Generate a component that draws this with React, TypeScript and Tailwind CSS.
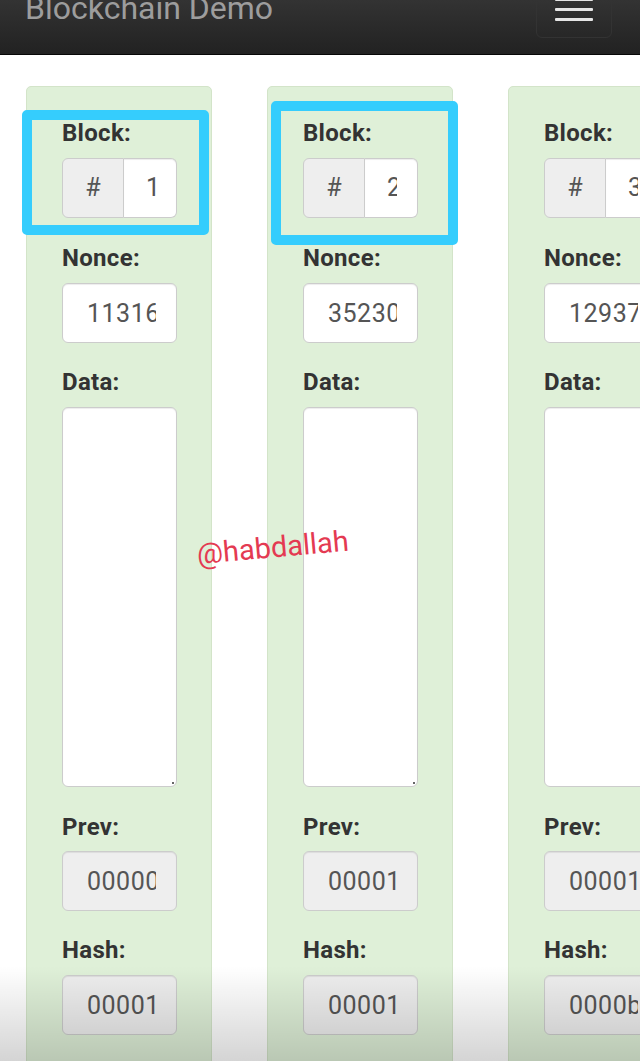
import React from "react";

type BlockData = {
  num: string;
  nonce: string;
  prev: string;
  hash: string;
};

const blocks: BlockData[] = [
  { num: "1", nonce: "11316", prev: "0000000000000000000000000000000000000000000000000000000000000000", hash: "000015783b764259d382017d91a36d206d0600e2cbb3567748f46a33fe9297cf" },
  { num: "2", nonce: "35230", prev: "000015783b764259d382017d91a36d206d0600e2cbb3567748f46a33fe9297cf", hash: "000012fa9b916eb9078f8d98a7864e697ae83ed54f5146bd84452cdafd043c19" },
  { num: "3", nonce: "12937", prev: "000012fa9b916eb9078f8d98a7864e697ae83ed54f5146bd84452cdafd043c19", hash: "0000b9015ce2a08b61216ba5a0778545bf4ddd7ceb7bbd85dd8062b29a9140bf" },
];

const font = { fontFamily: "Roboto, 'Noto Sans', 'Liberation Sans', sans-serif" };

function Label({ text, cls }: { text: string; cls: string }) {
  return (
    <div className={"text-[24px] font-bold leading-[30px] tracking-[0.3px] text-[#333333] " + cls}>{text}</div>
  );
}

function Block({ b }: { b: BlockData }) {
  return (
    <div className="w-[186px] h-[1000px] shrink-0 rounded-t-[5px] border border-[#d3e4c9] bg-[#dff0d8] pt-[31px] pl-[35px]">
      <div className="w-[115px] flex flex-col">
        <Label text="Block:" cls="mb-[10px]" />
        <div className="flex h-[60px] mb-[25px]">
          <div className="w-[62px] h-[60px] flex items-center justify-center rounded-l-[6px] border border-[#cccccc] bg-[#eeeeee] text-[25px] text-[#555555]">
            #
          </div>
          <div className="w-[53px] h-[60px] rounded-r-[6px] border border-l-0 border-[#cccccc] bg-white pl-[22px] pr-[20px] shadow-[inset_0_1px_1px_rgba(0,0,0,0.075)]">
            <div className="h-full overflow-hidden flex items-center text-[25px] text-[#555555] whitespace-nowrap">
              {b.num}
            </div>
          </div>
        </div>
        <Label text="Nonce:" cls="mb-[10px]" />
        <input
          readOnly
          value={b.nonce}
          style={font}
          className="w-[115px] h-[60px] mb-[24px] rounded-[6px] border border-[#cccccc] bg-white pl-[24px] pr-[20px] text-[25px] tracking-[0.5px] text-[#555555] shadow-[inset_0_1px_1px_rgba(0,0,0,0.075)] outline-none"
        />
        <Label text="Data:" cls="mb-[10px]" />
        <div className="relative w-[115px] h-[380px] mb-[25px] rounded-[6px] border border-[#cccccc] bg-white shadow-[inset_0_1px_1px_rgba(0,0,0,0.075)]">
          <span className="absolute right-[2px] bottom-[2px] w-[2px] h-[2px] bg-[#666666]" />
        </div>
        <Label text="Prev:" cls="mb-[9px]" />
        <input
          readOnly
          value={b.prev}
          style={font}
          className="w-[115px] h-[60px] mb-[24px] rounded-[6px] border border-[#cccccc] bg-[#eeeeee] pl-[24px] pr-[20px] text-[25px] tracking-[0.5px] text-[#555555] shadow-[inset_0_1px_1px_rgba(0,0,0,0.075)] outline-none"
        />
        <Label text="Hash:" cls="mb-[10px]" />
        <input
          readOnly
          value={b.hash}
          style={font}
          className="w-[115px] h-[60px] rounded-[6px] border border-[#cccccc] bg-[#eeeeee] pl-[24px] pr-[20px] text-[25px] tracking-[0.5px] text-[#555555] shadow-[inset_0_1px_1px_rgba(0,0,0,0.075)] outline-none"
        />
      </div>
    </div>
  );
}

export default function App() {
  return (
    <div
      className="relative w-[640px] h-[1061px] overflow-hidden bg-white"
      style={font}
    >
      <header className="h-[55px] flex items-start justify-between pl-[25px] pr-[28px] border-b border-[#080808] bg-gradient-to-b from-[#333333] to-[#222222]">
        <div className="-mt-[8px] text-[32px] leading-[32px] text-[#9d9d9d] whitespace-nowrap">
          Blockchain Demo
        </div>
        <div className="-mt-[12px] w-[76px] h-[50px] rounded-[6px] border border-[#333333] flex flex-col items-center justify-end gap-[7px] pb-[16px]">
          <span className="block w-[38px] h-[3px] rounded-[1px] bg-[#e6e6e6]" />
          <span className="block w-[38px] h-[3px] rounded-[1px] bg-[#e6e6e6]" />
          <span className="block w-[38px] h-[3px] rounded-[1px] bg-[#e6e6e6]" />
        </div>
      </header>

      <main className="flex gap-[55px] pt-[31px] pl-[26px]">
        {blocks.map((b) => (
          <Block key={b.num} b={b} />
        ))}
      </main>

      {/* highlight boxes */}
      <div className="absolute left-[22px] top-[110px] w-[187px] h-[125px] rounded-[5px] border-[10px] border-[#35cdfd]" />
      <div className="absolute left-[271px] top-[101px] w-[187px] h-[144px] rounded-[5px] border-[10px] border-[#35cdfd]" />

      {/* watermark */}
      <div className="absolute left-[197px] top-[536px] text-[29px] leading-[36px] text-[#e43a52] -rotate-[5deg] origin-left whitespace-nowrap">
        @habdallah
      </div>

      {/* bottom shade */}
      <div className="absolute left-0 right-0 bottom-0 h-[95px] bg-gradient-to-b from-transparent to-[rgba(0,0,0,0.17)] pointer-events-none" />
    </div>
  );
}
